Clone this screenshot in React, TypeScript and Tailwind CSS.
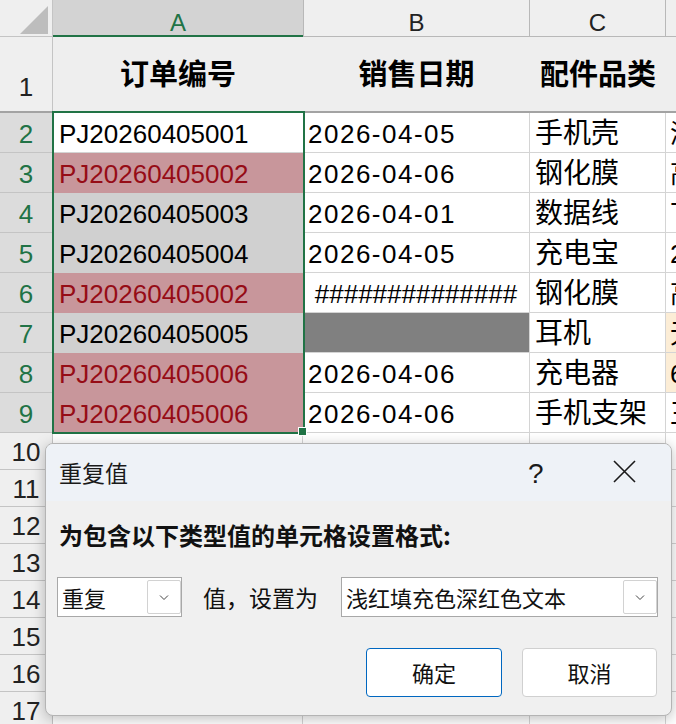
import React from 'react'

type Row = {
  n: number
  a: string
  dup?: boolean
  active?: boolean
  b: string
  bFill?: string
  hash?: boolean
  c: string
  d: string
  dOrange?: boolean
}

const rows: Row[] = [
  { n: 2, a: 'PJ20260405001', active: true, b: '2026-04-05', c: '手机壳', d: '浙' },
  { n: 3, a: 'PJ20260405002', dup: true, b: '2026-04-06', c: '钢化膜', d: '高' },
  { n: 4, a: 'PJ20260405003', b: '2026-04-01', c: '数据线', d: '下' },
  { n: 5, a: 'PJ20260405004', b: '2026-04-05', c: '充电宝', d: '2' },
  { n: 6, a: 'PJ20260405002', dup: true, b: '##############', hash: true, c: '钢化膜', d: '高' },
  { n: 7, a: 'PJ20260405005', b: '', bFill: 'gray', c: '耳机', d: '无', dOrange: true },
  { n: 8, a: 'PJ20260405006', dup: true, b: '2026-04-06', c: '充电器', d: '6', dOrange: true },
  { n: 9, a: 'PJ20260405006', dup: true, b: '2026-04-06', c: '手机支架', d: '王' },
]

const emptyRows = [10, 11, 12, 13, 14, 15, 16, 17]

function Chevron() {
  return (
    <svg width="10" height="7" viewBox="0 0 10 7" fill="none">
      <path d="M1 1.5 L5 5.5 L9 1.5" stroke="#444" strokeWidth="1" />
    </svg>
  )
}

function Select({ text, width, btnLeft }: { text: string; width: string; btnLeft: string }) {
  return (
    <div className={`relative shrink-0 h-[40px] ${width} bg-white border border-[#a8a8a8] flex items-center pl-[4px]`}>
      <span className="text-[22px] text-[#111]">{text}</span>
      <div
        className={`absolute ${btnLeft} top-[2px] bottom-[2px] w-[34px] border border-[#d2d2d2] rounded-[2px] flex items-center justify-center`}
      >
        <Chevron />
      </div>
    </div>
  )
}

export default function App() {
  return (
    <div className="relative w-[676px] h-[724px] overflow-hidden bg-white font-['Liberation_Sans','Noto_Sans_CJK_SC',sans-serif] text-black">
      {/* column headers */}
      <div className="flex h-[37px]">
        <div className="w-[53px] bg-[#efefef] border-r border-b border-[#c4c4c4] flex items-end justify-end pr-[3px] pb-[1px]">
          <svg width="29" height="29" viewBox="0 0 29 29">
            <polygon points="0,28 28,28 28,0" fill="#bdbdbd" />
          </svg>
        </div>
        <div className="w-[250px] bg-[#d3d3d3] border-b-2 border-[#217346] flex justify-center pt-[5px] text-[24px] text-[#217346]">
          A
        </div>
        <div className="w-[227px] bg-[#efefef] border-l border-r border-b border-[#b8b8b8] flex justify-center pt-[5px] text-[24px] text-[#222]">
          B
        </div>
        <div className="w-[136px] bg-[#efefef] border-r border-b border-[#b8b8b8] flex justify-center pt-[5px] text-[24px] text-[#222]">
          C
        </div>
        <div className="flex-1 bg-[#efefef] border-b border-[#b8b8b8]" />
      </div>

      {/* row 1 */}
      <div className="flex h-[76px]">
        <div className="w-[53px] bg-[#efefef] border-r border-[#c4c4c4] border-b-2 border-b-[#a3a3a3] flex items-end justify-center pb-[4px] text-[26px] text-[#222]">
          1
        </div>
        <div className="w-[250px] bg-[#eeeeee] border-b-2 border-[#a3a3a3] flex items-center justify-center pt-[3px] text-[29px] font-bold">
          订单编号
        </div>
        <div className="w-[227px] bg-[#eeeeee] border-b-2 border-[#a3a3a3] flex items-center justify-center pt-[3px] text-[29px] font-bold">
          销售日期
        </div>
        <div className="w-[136px] bg-[#eeeeee] border-b-2 border-[#a3a3a3] flex items-center justify-center pt-[3px] text-[29px] font-bold">
          配件品类
        </div>
        <div className="flex-1 bg-[#eeeeee] border-b-2 border-[#a3a3a3]" />
      </div>

      {/* data rows */}
      {rows.map((r) => (
        <div key={r.n} className="flex h-[40px]">
          <div className="w-[53px] bg-[#dcdcdc] border-r border-b border-[#c4c4c4] flex items-center justify-center pt-[3px] text-[26px] text-[#217346]">
            {r.n}
          </div>
          <div
            className={`w-[250px] border-b flex items-center pl-[6px] pt-[3px] text-[26px] ${
              r.active
                ? 'bg-white border-[#d4d4d4] text-black'
                : r.dup
                  ? 'bg-[#c8969b] border-[#c8969b] text-[#960c16]'
                  : 'bg-[#d0d0d0] border-[#d0d0d0] text-black'
            }`}
          >
            {r.a}
          </div>
          <div
            className={`w-[227px] border-r border-b border-[#d4d4d4] flex items-center pt-[3px] text-[26px] ${
              r.hash ? 'justify-center' : 'pl-[5px] tracking-[1.5px]'
            } ${r.bFill ? 'bg-[#808080]' : 'bg-white'}`}
          >
            {r.b}
          </div>
          <div className="w-[136px] border-r border-b border-[#d4d4d4] flex items-center pl-[5px] pt-[3px] text-[28px] bg-white whitespace-nowrap">
            {r.c}
          </div>
          <div
            className={`flex-1 overflow-hidden border-b border-[#d4d4d4] flex items-center pl-[4px] pt-[3px] text-[26px] whitespace-nowrap ${
              r.dOrange ? 'bg-[#fcedd6]' : 'bg-white'
            }`}
          >
            {r.d}
          </div>
        </div>
      ))}

      {/* empty rows */}
      {emptyRows.map((n) => (
        <div key={n} className="flex h-[37px]">
          <div className="w-[53px] bg-[#efefef] border-r border-b border-[#c4c4c4] flex items-center justify-center pt-[2px] text-[26px] text-[#222]">
            {n}
          </div>
          <div className="w-[250px] border-r border-b border-[#d4d4d4]" />
          <div className="w-[227px] border-r border-b border-[#d4d4d4]" />
          <div className="w-[136px] border-r border-b border-[#d4d4d4]" />
          <div className="flex-1 border-b border-[#d4d4d4]" />
        </div>
      ))}

      {/* selection outline */}
      <div className="absolute left-[52px] top-[111px] w-[253px] h-[323px] border-2 border-[#217346]" />
      <div className="absolute left-[298px] top-[427px] w-[9px] h-[9px] bg-[#217346] border border-white" />

      {/* dialog */}
      <div className="absolute left-[45px] top-[443px] w-[627px] h-[273px] rounded-[8px] border border-[#b4b4b4] bg-[#f0f0f0] shadow-[0_3px_14px_rgba(0,0,0,0.25)] overflow-hidden font-['Noto_Sans_CJK_SC',sans-serif]">
        <div className="h-[57px] bg-[#eef2f7] flex items-center pl-[13px] relative">
          <span className="text-[23px] text-[#1a1a1a]">重复值</span>
          <span className="absolute left-[482px] top-[9px] text-[28px] font-light text-[#1a1a1a] font-['Liberation_Sans',sans-serif]">
            ?
          </span>
          <svg className="absolute left-[567px] top-[16px]" width="23" height="23" viewBox="0 0 23 23">
            <path d="M1 1 L22 22 M22 1 L1 22" stroke="#1a1a1a" strokeWidth="1.6" />
          </svg>
        </div>
        <div className="pl-[13px] pt-[18px] text-[24px] font-bold leading-[32px] text-[#111]">
          为包含以下类型值的单元格设置格式:
        </div>
        <div className="flex items-center pl-[11px] mt-[26px]">
          <Select text="重复" width="w-[125px]" btnLeft="left-[89px]" />
          <span className="ml-[21px] w-[117px] shrink-0 whitespace-nowrap text-[23px] text-[#111]">值，设置为</span>
          <div className="ml-[21px]">
            <Select text="浅红填充色深红色文本" width="w-[317px]" btnLeft="left-[281px]" />
          </div>
        </div>
        <div className="flex justify-end gap-[20px] pr-[14px] mt-[31px]">
          <button className="w-[136px] h-[49px] bg-white border border-[#0067c0] rounded-[4px] text-[22px] text-[#111]">
            确定
          </button>
          <button className="w-[135px] h-[49px] bg-white border border-[#d0d0d0] rounded-[4px] text-[22px] text-[#111]">
            取消
          </button>
        </div>
      </div>
    </div>
  )
}
